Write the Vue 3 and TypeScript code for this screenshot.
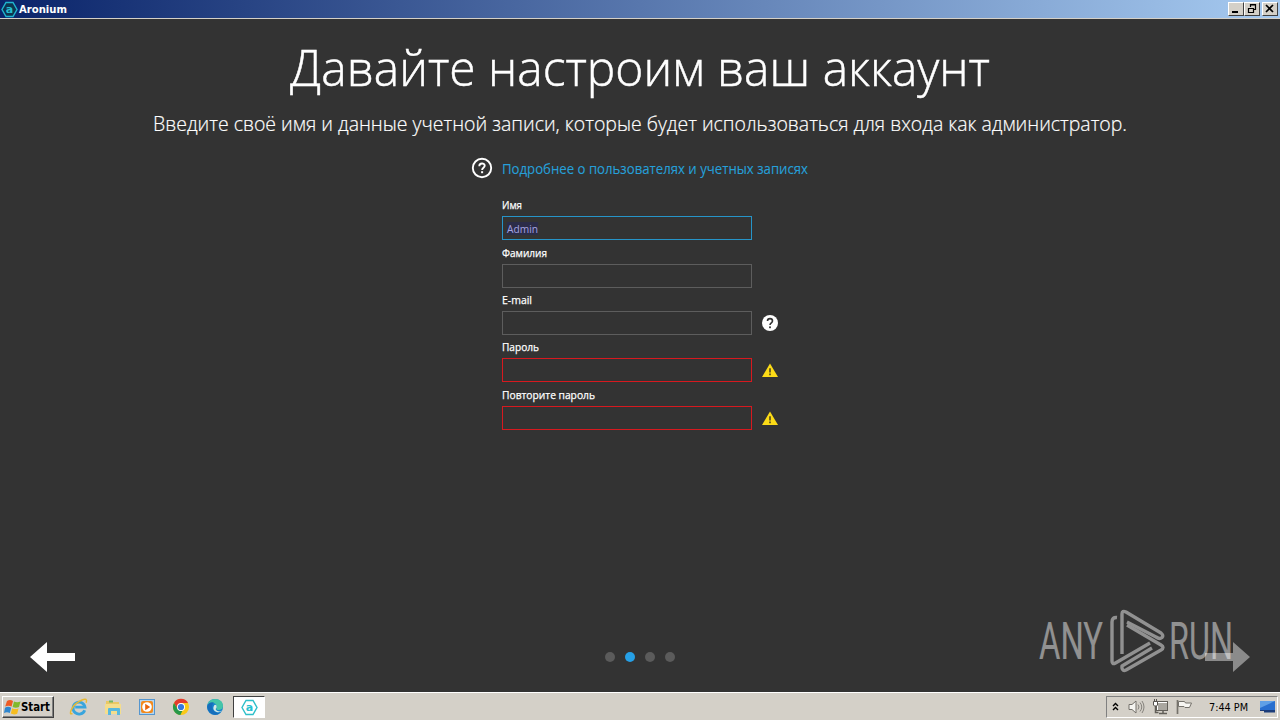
<script setup lang="ts">
interface Field { label: string; width: number; value: string; state: string; hint: string }

const fields: Field[] = [
  { label: 'Имя', width: 20, value: 'Admin', state: 'focused', hint: '' },
  { label: 'Фамилия', width: 45, value: '', state: '', hint: '' },
  { label: 'E-mail', width: 30, value: '', state: '', hint: 'help' },
  { label: 'Пароль', width: 37, value: '', state: 'invalid', hint: 'warning' },
  { label: 'Повторите пароль', width: 93, value: '', state: 'invalid', hint: 'warning' },
]
const steps = [1, 2, 3, 4]
const currentStep = 2
</script>

<template>
  <div class="screen">
    <header class="titlebar">
      <svg class="app-icon" width="17" height="17" viewBox="0 0 17 17">
        <path d="M5 1.5h7l4 7-4 7H5l-4-7z" fill="#0d3550" stroke="#20b5cf" stroke-width="1.4" />
        <text x="8.5" y="12.4" text-anchor="middle" class="mark">a</text>
      </svg>
      <svg class="app-name" width="60" height="17"><text x="0" y="13" textLength="48" lengthAdjust="spacingAndGlyphs">Aronium</text></svg>
      <div class="window-buttons">
        <span class="wbtn"><svg width="14" height="12"><path d="M3 9h6" stroke="#000" stroke-width="2" /></svg></span>
        <span class="wbtn"><svg width="14" height="12"><path d="M5.5 4V1.5h5v5H9M5 2h6M3.5 5.5h5v4h-5zM3 5.5h6" fill="none" stroke="#000" stroke-width="1.2" /></svg></span>
        <span class="wbtn close"><svg width="14" height="12"><path d="M3 2l7 7M10 2L3 9" stroke="#000" stroke-width="1.7" /></svg></span>
      </div>
    </header>

    <main class="page">
      <h1><svg width="740" height="66"><text x="20" y="49.5" textLength="700" lengthAdjust="spacingAndGlyphs">Давайте настроим ваш аккаунт</text></svg></h1>
      <p class="intro"><svg width="1014" height="34"><text x="20" y="23" textLength="974" lengthAdjust="spacingAndGlyphs">Введите своё имя и данные учетной записи, которые будет использоваться для входа как администратор.</text></svg></p>
      <div class="more">
        <svg class="more-icon" width="22" height="22" viewBox="0 0 22 22">
          <circle cx="11" cy="11" r="9.2" fill="none" stroke="#fff" stroke-width="1.9" />
          <path d="M8.3 9.2C8.3 5.6 13.7 5.7 13.7 8.8C13.7 10.7 11.1 10.8 11.1 13" fill="none" stroke="#fff" stroke-width="1.9" />
          <rect x="10.1" y="14.2" width="2" height="2" fill="#fff" />
        </svg>
        <svg width="330" height="22"><text x="0" y="16" textLength="306" lengthAdjust="spacingAndGlyphs">Подробнее о пользователях и учетных записях</text></svg>
      </div>
      <form class="form">
        <div v-for="f in fields" :key="f.label" class="field">
          <svg class="label" width="120" height="18"><text x="0" y="11" :textLength="f.width" lengthAdjust="spacingAndGlyphs">{{ f.label }}</text></svg>
          <div class="row">
            <div class="input" :class="f.state"><svg v-if="f.value" width="60" height="20"><rect x="0" y="5" width="31" height="13" fill="#2b2c48" /><text x="0" y="16" textLength="31" lengthAdjust="spacingAndGlyphs">{{ f.value }}</text></svg></div>
            <svg v-if="f.hint === 'help'" width="16" height="16" viewBox="0 0 16 16">
              <circle cx="8" cy="8" r="8" fill="#fff" />
              <path d="M5.5 6C5.5 2.8 10.5 2.8 10.5 6C10.5 7.8 8 7.8 8 10" fill="none" stroke="#333" stroke-width="1.6" />
              <rect x="7.1" y="11.4" width="1.8" height="1.8" fill="#333" />
            </svg>
            <svg v-if="f.hint === 'warning'" width="16" height="16" viewBox="0 0 16 16">
              <path d="M8 1.5L16 15H0z" fill="#fcdb17" />
              <path d="M8 6.2v4.2M8 11.6v1.7" stroke="#4b4320" stroke-width="1.6" />
            </svg>
          </div>
        </div>
      </form>
      <nav class="pager">
        <svg class="arrow" width="45" height="30" viewBox="0 0 45 30"><path d="M0 15L17 0v11h28v8H17v11z" fill="#fff" /></svg>
        <div class="dots"><i v-for="s in steps" :key="s" :class="{ on: s === currentStep }" /></div>
        <svg class="arrow" width="45" height="30" viewBox="0 0 45 30"><path d="M45 15L28 0v11H0v8h28v11z" fill="#8b8b8b" /></svg>
      </nav>
      <svg class="watermark" width="200" height="64" viewBox="0 0 200 64">
        <text x="3" y="51" textLength="64" lengthAdjust="spacingAndGlyphs">ANY</text>
        <text x="133" y="51" textLength="64" lengthAdjust="spacingAndGlyphs">RUN</text>
        <g fill="none" stroke="#fff" stroke-width="3.4" stroke-linejoin="round">
          <path d="M81 9.5Q76 9 76 14V53Q76 57 79.500 55L114 35" />
          <path d="M86 46V6Q86 2 90 4L125 25Q128 27.500 126 29.500Q123.500 31.500 120 29L91 14" />
          <path d="M91 17L125 37Q129 39.500 125 42L90 62Q86.500 63.500 86 60V58L116 40" />
        </g>
      </svg>
    </main>

    <footer class="taskbar">
      <div class="start">
        <svg width="17" height="17" viewBox="0 0 17 17">
          <path d="M3 2Q6 0 9 2L7.6 7.5Q4.5 6 1.2 7.5z" fill="#ee5b24" />
          <path d="M10 2.5Q13 4 16.5 2.5L15 8Q12 9.5 8.6 8z" fill="#81b92d" />
          <path d="M1 8.7Q4 7 7.2 8.7L5.8 14Q3 12.5 0 14z" fill="#2f86ce" />
          <path d="M8.2 9.2Q11.5 11 14.6 9.2L13.2 14.7Q10 16.2 6.8 14.6z" fill="#f6bd20" />
        </svg>
        <svg width="32" height="17"><text x="0" y="12" textLength="29" lengthAdjust="spacingAndGlyphs">Start</text></svg>
      </div>
      <div class="launch">
        <svg width="18" height="18" viewBox="0 0 18 18">
          <path d="M14.7 12.2A6 6 0 1 1 15 9.2H5.2" fill="none" stroke="#39a5dd" stroke-width="2.8" />
          <path d="M2.5 15.5Q-.8 17 1.2 12Q4 5.5 12 2Q17.8-.4 16.2 4.7" fill="none" stroke="#e8b932" stroke-width="1.5" />
        </svg>
        <svg width="18" height="18" viewBox="0 0 18 18">
          <path d="M2 3h5l1 1h7v12H2z" fill="#e9c864" /><path d="M5 2.500h4v2H5z" fill="#73b764" /><path d="M1 6h16v10H1z" fill="#f4dd8c" />
          <path d="M4 17v-6q0-1 1-1h10q1 0 1 1v6h-3v-4H7v4z" fill="#58b8de" />
        </svg>
        <svg width="18" height="18" viewBox="0 0 18 18">
          <rect x="1.5" y="1.5" width="15" height="15" fill="#b5d6ef" stroke="#5596cf" />
          <rect x="3" y="3" width="12" height="12" rx="2" fill="#f38a1d" /><circle cx="9" cy="9" r="4.8" fill="#fff" /><path d="M7.2 5.7v6.6l5-3.3z" fill="#e8650c" />
        </svg>
        <svg width="18" height="18" viewBox="0 0 18 18">
          <circle cx="9" cy="9" r="8" fill="#fac918" />
          <path d="M2 5A8 8 0 0 1 16 5H9L5.7 11z" fill="#e33b2e" /><path d="M2 5L5.7 11Q7 13 10.5 12.5L8.4 17A8 8 0 0 1 2 5z" fill="#27984a" />
          <circle cx="9" cy="9" r="4" fill="#fff" /><circle cx="9" cy="9" r="3.1" fill="#3578df" />
        </svg>
        <svg width="18" height="18" viewBox="0 0 18 18">
          <circle cx="9" cy="9" r="8" fill="#1682cb" /><path d="M1.3 8Q2.5 1 9 1Q17 1.3 17 8Q16.8 12 12.2 12Q9.5 12 10.6 9.5Q11 5 6.5 5Q2.5 5 1.3 8z" fill="#45c5a8" />
          <path d="M1.3 8Q3 3.3 8 4.5Q5 7 6.5 11Q8 15 13.8 15.2A8 8 0 0 1 1.3 8z" fill="#176ebc" /><path d="M10.6 9.5Q8.5 11.5 11.5 13Q14 14 16 12.6Q14 15 10.5 14Q6 12 7.8 8Q9 6 10.5 7.5z" fill="#d4e9e6" />
        </svg>
        <span class="task"><svg width="17" height="17" viewBox="0 0 17 17">
          <path d="M5 1.5h7l4 7-4 7H5l-4-7z" fill="none" stroke="#2ebfc9" stroke-width="1.4" />
          <text x="8.5" y="12.2" text-anchor="middle" class="mark">a</text>
        </svg></span>
      </div>
      <div class="tray">
        <svg class="chev" width="8" height="12"><path d="M1 5l2.5-2.5L6 5M1 9l2.5-2.5L6 9" fill="none" stroke="#000" stroke-width="1.4" /></svg>
        <svg width="17" height="16" viewBox="0 0 17 16"><path d="M1 5.5h3L8 2v12l-4-3.5H1z" fill="#f5f4f0" stroke="#74716b" /><path d="M10 5.5q2 2.5 0 5M12 3.5q3.5 4.5 0 9M14 2q4 6 0 12" fill="none" stroke="#85827c" /></svg>
        <svg width="17" height="16" viewBox="0 0 17 16"><rect x="5.5" y="3.5" width="10" height="8" fill="#aaa7a0" stroke="#fff" /><rect x="4.5" y="2.5" width="11" height="9" fill="none" stroke="#625f59" /><path d="M7 14.5h8M11 12v2M3.5 7v6.5h3" fill="none" stroke="#625f59" stroke-width="1.5" /><path d="M1.5 2.5h4v3.5l-1 1h-2l-1-1zM2.5 2V0M4.5 2V0" fill="#fff" stroke="#56534e" /></svg>
        <svg width="17" height="16" viewBox="0 0 17 16"><path d="M1.5 1v14" stroke="#75726b" stroke-width="1.7" /><path d="M2.5 2.5h6l1 1.5h6l-2 4.5H9l-1-1H2.5z" fill="#f7f6f2" stroke="#75726b" /></svg>
        <svg class="clock" width="42" height="16"><text x="1" y="12" textLength="39" lengthAdjust="spacingAndGlyphs">7:44 PM</text></svg>
        <svg class="desktop" width="17" height="16" viewBox="0 0 17 16"><path d="M1 2h15v9H1z" fill="#286fcf" /><path d="M1 2h15L1 9z" fill="#5fa0e6" /><path d="M1 11h15v2.500H5V12H1z" fill="#1b3c79" /></svg>
      </div>
    </footer>
  </div>
</template>

<style scoped>
* { box-sizing: border-box; }
svg { display: block; flex: none; overflow: visible; }
.screen { width: 1280px; height: 720px; overflow: hidden; display: flex; flex-direction: column; background: #333; font-family: 'Open Sans', sans-serif; }
.titlebar { height: 19px; flex: none; display: flex; align-items: flex-start; padding: 0 2px 0 1px; background: linear-gradient(90deg, #0a246a, #a6caf0); border-bottom: 1px solid #d4d0c8; }
.app-icon { margin-top: 1px; }
.app-name { margin-left: 1px; }
.app-name text { fill: #fff; font: bold 11px 'DejaVu Sans', sans-serif; }
.mark { font: bold 11px 'DejaVu Sans', sans-serif; fill: #25bfd0; }
.window-buttons { display: flex; margin: 2px 0 0 auto; }
.wbtn { width: 16px; height: 14px; background: #d4d0c8; border: 1px solid; border-color: #fff #404040 #404040 #fff; }
.close { margin-left: 2px; }
.page { position: relative; height: 673px; flex: none; display: flex; flex-direction: column; align-items: center; }
h1 { margin: 17px 0 0; height: 66px; }
h1 text { font: 300 50.5px 'Open Sans', sans-serif; fill: #fff; stroke: #fff; stroke-width: .5px; }
.intro { margin: 6px 0 0; height: 34px; }
.intro text { font: 300 20.5px 'Open Sans', sans-serif; fill: #fff; stroke: #fff; stroke-width: .2px; }
.more { display: flex; gap: 9px; width: 341px; margin: 16px 0 0 3px; height: 22px; }
.more-icon { margin-top: -1px; }
.more text { font: 14px 'Open Sans', sans-serif; fill: #26a0da; stroke: #26a0da; stroke-width: .1px; }
.form { width: 276px; margin-top: 18.2px; }
.field { height: 47.4px; }
.label { height: 18px; }
.label text { font: 11px 'Open Sans', sans-serif; fill: #fff; stroke: #fff; stroke-width: .25px; }
.row { display: flex; align-items: center; gap: 10px; }
.input { width: 250px; height: 24px; border: 1px solid #5d5d5d; padding-left: 4px; flex: none; }
.input text { font: 11px 'Open Sans', sans-serif; fill: #a5a4e3; }
.input.focused { border: 1px solid #2694c8; }
.input.invalid { border: 1px solid #d7191f; }
.pager { width: 1220px; margin-top: auto; margin-bottom: 20px; display: flex; align-items: center; justify-content: space-between; }
.dots { display: flex; gap: 10px; }
.dots i { width: 10px; height: 10px; border-radius: 50%; background: #5b5b5b; }
.dots .on { background: #26a0e6; }
.watermark { position: absolute; left: 1036px; top: 589px; opacity: .46; }
.watermark text { font: 400 52px Roboto, sans-serif; fill: #fff; }
.taskbar { height: 28px; flex: none; display: flex; align-items: flex-start; background: #d4d0c8; border-top: 1px solid #fff; padding: 3px 2px 0; }
.start { width: 52px; height: 22px; display: flex; align-items: center; padding-left: 1px; border: 1px solid; border-color: #fff #404040 #404040 #fff; box-shadow: inset -1px -1px #808080; }
.start text { font: bold 11.5px 'DejaVu Sans', sans-serif; }
.launch { display: flex; align-items: center; gap: 16px; margin-left: 16px; height: 22px; }
.task { width: 32px; height: 22px; margin-left: -7px; padding: 2px 0 0 7px; background: #fff; border: 1px solid; border-color: #404040 #fff #fff #404040; }
.tray { width: 172px; height: 22px; margin-left: auto; display: flex; align-items: center; padding-left: 5px; gap: 7px; border: 1px solid; border-color: #808080 #fff #fff #808080; }
.chev { margin-right: 1px; }
.clock { margin-left: 8px; }
.clock text { font: 11px 'DejaVu Sans Condensed', 'DejaVu Sans', sans-serif; }
.desktop { margin-left: 2px; }
</style>
